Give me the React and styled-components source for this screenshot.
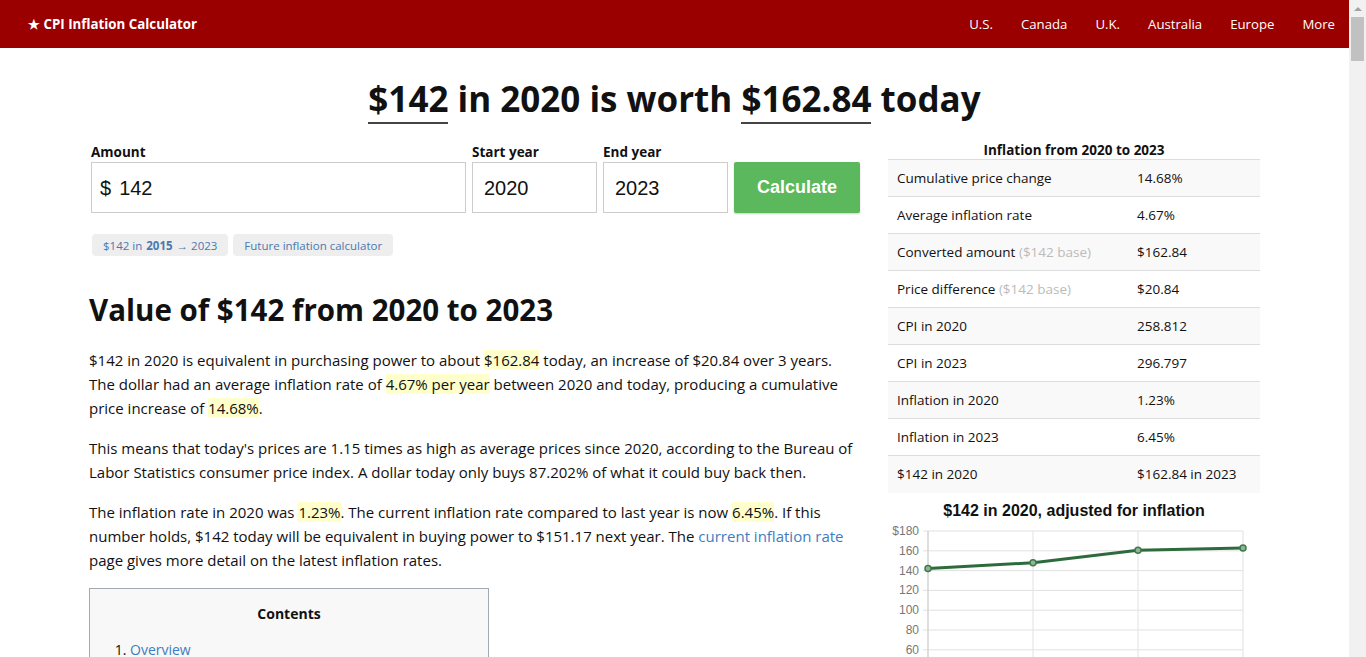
import React from "react";
import styled, { createGlobalStyle } from "styled-components";

const GlobalStyle = createGlobalStyle`
  body {
    margin: 0;
    padding-right: 17px;
    font-family: "Open Sans", "Noto Sans", sans-serif;
    color: #111;
    background: #fff;
  }
  * { box-sizing: border-box; }
`;

const Scrollbar = styled.div`
  position: fixed;
  top: 0;
  right: 0;
  width: 17px;
  height: 100vh;
  background: #f1f1f1;
  z-index: 10;
`;

const ScrollArrow = styled.div`
  height: 17px;
  display: flex;
  align-items: center;
  justify-content: center;
  &::before {
    content: "";
    border-left: 4px solid transparent;
    border-right: 4px solid transparent;
    border-bottom: 4px solid #a3a3a3;
  }
`;

const ScrollThumb = styled.div`
  margin: 0 2px;
  height: 44px;
  background: #c1c1c1;
`;

const Nav = styled.nav`
  height: 48px;
  background: #9b0000;
  display: flex;
  align-items: center;
  justify-content: space-between;
  padding: 0 0 0 28px;
  color: #fff;
  font-size: 13.2px;
`;

const Brand = styled.a`
  font-weight: 700;
  font-size: 13.3px;
  color: #fff;
  text-decoration: none;
`;

const NavLinks = styled.div`
  display: flex;
`;

const NavLink = styled.a`
  color: #fff;
  text-decoration: none;
  padding: 0 14px;
`;

const Container = styled.div`
  width: 1171px;
  margin: 0 auto;
`;

const Headline = styled.h1`
  margin: 27px 0 19px;
  text-align: center;
  font-size: 35px;
  font-weight: 700;
  line-height: 48px;
`;

const Amount = styled.span`
  border-bottom: 2px solid #444;
`;

const Columns = styled.div`
  display: flex;
  gap: 30px;
  align-items: flex-start;
`;

const Main = styled.div`
  width: 769px;
`;

const Side = styled.aside`
  width: 372px;
`;

const Form = styled.div`
  display: grid;
  grid-template-columns: 375px 125px 125px 126px;
  column-gap: 6px;
  padding-left: 2px;
  align-items: end;
`;

const Field = styled.label`
  display: flex;
  flex-direction: column;
  font-size: 13.5px;
  font-weight: 700;
  line-height: 20px;
`;

const Input = styled.div`
  height: 51px;
  border: 1px solid #ccc;
  display: flex;
  align-items: center;
  padding-left: ${(p) => p.$pad || 11}px;
  font-family: "Liberation Sans", Arial, sans-serif;
  font-size: 20px;
  font-weight: 400;
  color: #111;
`;

const Dollar = styled.span`
  margin-right: 8px;
`;

const Button = styled.button`
  height: 51px;
  border: none;
  border-radius: 2px;
  background: #5cb85c;
  color: #fff;
  font-family: "Liberation Sans", Arial, sans-serif;
  font-size: 18px;
  font-weight: 700;
  box-shadow: 0 1px 2px rgba(0, 0, 0, 0.2);
`;

const Pills = styled.div`
  display: flex;
  gap: 5px;
  margin: 21px 0 0 3px;
`;

const Pill = styled.a`
  background: #eee;
  border-radius: 4px;
  height: 22px;
  padding: 0 11px;
  display: flex;
  align-items: center;
  font-size: 11.5px;
  color: #4a78b0;
  text-decoration: none;
  b { margin: 0 4px; }
`;

const SectionTitle = styled.h2`
  margin: 34px 0 18px;
  font-size: 29.5px;
  font-weight: 700;
  line-height: 40px;
`;

const Para = styled.p`
  margin: 0 0 16px;
  font-size: 15px;
  line-height: 24px;
`;

const Mark = styled.span`
  background: #ffffcc;
`;

const Link = styled.a`
  color: #3d7dc1;
  text-decoration: none;
`;

const Contents = styled.div`
  width: 400px;
  margin-top: 16px;
  border: 1px solid #a2a9b1;
  background: #f8f8f8;
  padding: 15px 0 10px;
  font-size: 14px;
`;

const ContentsTitle = styled.div`
  text-align: center;
  font-weight: 700;
  line-height: 20px;
  margin-bottom: 14px;
`;

const TocList = styled.ol`
  margin: 0;
  padding-left: 40px;
  line-height: 24px;
`;

const Table = styled.table`
  width: 100%;
  border-collapse: collapse;
  font-size: 13.5px;
  margin-top: -1px;
  caption {
    font-weight: 700;
    font-size: 13.5px;
    line-height: 18px;
  }
  td {
    height: 37px;
    padding: 0 9px;
    border-top: 1px solid #ddd;
  }
  td:first-child { width: 240px; }
  tr:nth-child(odd) td { background: #f9f9f9; }
`;

const Muted = styled.span`
  color: #bbb;
`;

const ChartTitle = styled.div`
  margin-top: 8px;
  text-align: center;
  font-family: "Liberation Sans", Arial, sans-serif;
  font-size: 16px;
  font-weight: 700;
  line-height: 20px;
`;

const rows = [
  ["Cumulative price change", null, "14.68%"],
  ["Average inflation rate", null, "4.67%"],
  ["Converted amount", "($142 base)", "$162.84"],
  ["Price difference", "($142 base)", "$20.84"],
  ["CPI in 2020", null, "258.812"],
  ["CPI in 2023", null, "296.797"],
  ["Inflation in 2020", null, "1.23%"],
  ["Inflation in 2023", null, "6.45%"],
  ["$142 in 2020", null, "$162.84 in 2023"],
];

const navItems = ["U.S.", "Canada", "U.K.", "Australia", "Europe", "More"];

const data = [142, 148, 160.5, 162.84];
const ticks = [180, 160, 140, 120, 100, 80, 60, 40, 20, 0];
const yOf = (v) => 10 + (180 - v) * 0.99;
const xs = [40, 145, 250, 355];

const Chart = () => (
  <svg width="372" height="230" style={{ display: "block" }}>
    {xs.map((x) => (
      <line key={x} x1={x} y1={10} x2={x} y2={212} stroke="#e1e1e1" />
    ))}
    {ticks.map((t) => (
      <g key={t}>
        <line x1={35} x2={355} y1={yOf(t)} y2={yOf(t)} stroke="#e1e1e1" />
        <text
          x={31}
          y={yOf(t) + 4}
          textAnchor="end"
          fontSize="12"
          fill="#777"
          fontFamily="Liberation Sans, Arial, sans-serif"
        >
          {t === 180 ? "$180" : t}
        </text>
      </g>
    ))}
    <line x1={40} x2={40} y1={10} y2={212} stroke="#ccc" />
    <polyline
      points={data.map((v, i) => `${xs[i]},${yOf(v)}`).join(" ")}
      fill="none"
      stroke="#2d6b3c"
      strokeWidth="3"
      strokeLinejoin="round"
    />
    {data.map((v, i) => (
      <circle
        key={i}
        cx={xs[i]}
        cy={yOf(v)}
        r="3"
        fill="#8fb598"
        stroke="#3d7a4c"
        strokeWidth="1.5"
      />
    ))}
  </svg>
);

export default function App() {
  return (
    <>
      <GlobalStyle />
      <Scrollbar>
        <ScrollArrow />
        <ScrollThumb />
      </Scrollbar>
      <Nav>
        <Brand href="#">★ CPI Inflation Calculator</Brand>
        <NavLinks>
          {navItems.map((n) => (
            <NavLink key={n} href="#">
              {n}
            </NavLink>
          ))}
        </NavLinks>
      </Nav>
      <Container>
        <Headline>
          <Amount>$142</Amount> in 2020 is worth <Amount>$162.84</Amount> today
        </Headline>
        <Columns>
          <Main>
            <Form>
              <Field>
                Amount
                <Input $pad={8}>
                  <Dollar>$</Dollar>142
                </Input>
              </Field>
              <Field>
                Start year
                <Input>2020</Input>
              </Field>
              <Field>
                End year
                <Input>2023</Input>
              </Field>
              <Button>Calculate</Button>
            </Form>
            <Pills>
              <Pill href="#">
                $142 in<b>2015</b>→ 2023
              </Pill>
              <Pill href="#">Future inflation calculator</Pill>
            </Pills>
            <SectionTitle>Value of $142 from 2020 to 2023</SectionTitle>
            <Para>
              $142 in 2020 is equivalent in purchasing power to about{" "}
              <Mark>$162.84</Mark> today, an increase of $20.84 over 3 years.
              The dollar had an average inflation rate of{" "}
              <Mark>4.67% per year</Mark> between 2020 and today, producing a
              cumulative price increase of <Mark>14.68%</Mark>.
            </Para>
            <Para>
              This means that today's prices are 1.15 times as high as average
              prices since 2020, according to the Bureau of Labor Statistics
              consumer price index. A dollar today only buys 87.202% of what it
              could buy back then.
            </Para>
            <Para>
              The inflation rate in 2020 was <Mark>1.23%</Mark>. The current
              inflation rate compared to last year is now <Mark>6.45%</Mark>.
              If this number holds, $142 today will be equivalent in buying
              power to $151.17 next year. The{" "}
              <Link href="#">current inflation rate</Link> page gives more
              detail on the latest inflation rates.
            </Para>
            <Contents>
              <ContentsTitle>Contents</ContentsTitle>
              <TocList>
                <li><Link href="#">Overview</Link></li>
                <li><Link href="#">How to calculate inflation</Link></li>
                <li><Link href="#">Comparison to S&amp;P 500 index</Link></li>
                <li><Link href="#">Data source &amp; citation</Link></li>
              </TocList>
            </Contents>
          </Main>
          <Side>
            <Table>
              <caption>Inflation from 2020 to 2023</caption>
              <tbody>
                {rows.map(([label, note, value]) => (
                  <tr key={label}>
                    <td>
                      {label}
                      {note && <Muted> {note}</Muted>}
                    </td>
                    <td>{value}</td>
                  </tr>
                ))}
              </tbody>
            </Table>
            <ChartTitle>$142 in 2020, adjusted for inflation</ChartTitle>
            <Chart />
          </Side>
        </Columns>
      </Container>
    </>
  );
}
